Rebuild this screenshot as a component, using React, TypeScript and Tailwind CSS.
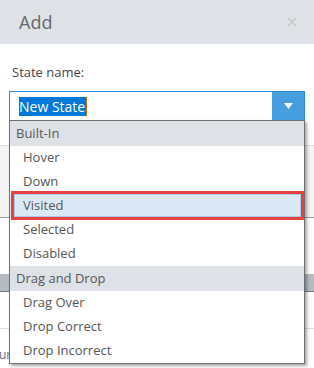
const groups = [
  { title: "Built-In", items: ["Hover", "Down", "Visited", "Selected", "Disabled"] },
  { title: "Drag and Drop", items: ["Drag Over", "Drop Correct", "Drop Incorrect"] },
];

function StateMenu({ active }: { active: string }) {
  return (
    <div className="absolute left-[9px] top-[120px] w-[296px] border border-[#6f6f6f] bg-white shadow-[2px_2px_3px_rgba(0,0,0,0.35)]">
      {groups.map((group) => (
        <div key={group.title}>
          <div className="flex h-[25px] items-center bg-[#dee2e6] pl-[6px] text-[13px] text-[#555]">
            {group.title}
          </div>
          {group.items.map((item) => (
            <div
              key={item}
              className={`relative flex h-6 items-center pl-[13px] text-[13px] text-[#555] ${
                item === active ? "bg-[#dbe9f6]" : ""
              }`}
            >
              {item}
              {item === active && (
                <span className="absolute -top-[3px] -bottom-[2px] left-px right-0 border-[3px] border-[#e8403d] shadow-[inset_0_0_0_1px_#a9cbee]" />
              )}
            </div>
          ))}
        </div>
      ))}
    </div>
  );
}

export default function App() {
  return (
    <div
      className="relative h-[368px] w-[314px] overflow-hidden bg-white"
      style={{ fontFamily: '"Open Sans", "Noto Sans", sans-serif' }}
    >
      <div className="flex h-[44px] items-center justify-between bg-[#dee2e6] pl-[19px] pr-[17px]">
        <span className="text-[18px] text-[#666]">Add</span>
        <svg width="10" height="10" viewBox="0 0 10 10">
          <path d="M1 1l8 8M9 1l-8 8" stroke="#c4c7ca" strokeWidth="1.6" />
        </svg>
      </div>

      <div className="px-[9px] pt-[18px]">
        <div className="pl-[3px] text-[13px] leading-[20px] text-[#444]">State name:</div>
        <div className="mt-[9px] flex h-[30px] border border-[#2b8ad8]">
          <div className="flex flex-1 items-center pl-[9px]">
            <span className="border-r border-[#d46a10] bg-[#0078d7] pr-px text-[14px] leading-[19px] text-white">
              New State
            </span>
          </div>
          <div className="flex w-[32px] items-center justify-center bg-[#459ee0]">
            <svg width="9" height="6" viewBox="0 0 9 6">
              <path d="M0 0h9L4.5 6z" fill="white" />
            </svg>
          </div>
        </div>
      </div>

      <div className="mt-[24px] h-[73px] border-y border-t-[#dcdcdc] border-b-[#9a9a9a] bg-[#f4f4f4]" />
      <div className="mt-[56px] h-[18px] border-b border-[#777] bg-[#b5bcc2]" />
      <div className="mt-[36px] border-t border-[#dedede]" />
      <div className="mt-[16px] -ml-px text-[12px] leading-[20px] text-[#5b6b8c]">ur</div>

      <StateMenu active="Visited" />
    </div>
  );
}
